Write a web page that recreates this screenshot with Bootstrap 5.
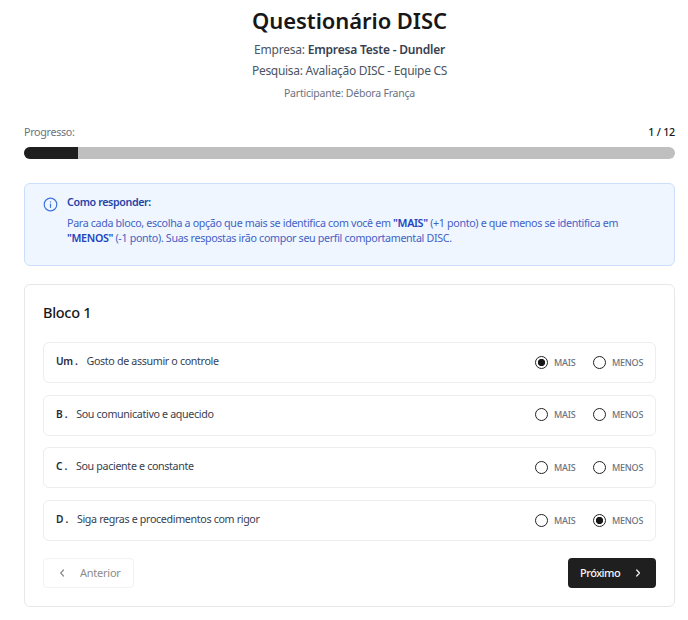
<!DOCTYPE html>
<html lang="pt-BR">
<head>
<meta charset="utf-8">
<meta name="viewport" content="width=device-width, initial-scale=1">
<title>Questionário DISC</title>
<link href="https://cdn.jsdelivr.net/npm/bootstrap@5.3.0/dist/css/bootstrap.min.css" rel="stylesheet">
<style>
body{font-family:"Noto Sans","Open Sans",sans-serif;font-size:10.7px;line-height:15px;color:#1f2937;background:#fff;letter-spacing:-.3px}
.page{padding:7px 13px 0 24px}
.page-body,.heading{width:651px}
.title{font-size:22px;line-height:27px;font-weight:600;color:#171717;letter-spacing:-.08px}
.heading .title{margin-bottom:5px}
.sub{font-size:12px;line-height:21px;color:#4b5563}
.company{letter-spacing:-.2px}
.sub strong{font-weight:600;color:#374151}
.person{font-size:10.5px;line-height:23px;padding-top:1px;color:#6b7280;letter-spacing:-.22px}
.meta-row{margin-top:19px;height:16px}
.meta-label{color:#6b7280}
.meta-count{font-weight:500;color:#171717;letter-spacing:-.2px}
.track{height:12px;margin-top:7px;border-radius:6px;background:#bfbfbf}
.track .progress-bar{background:#1f1f1f}
.notice{margin-top:24px;height:83px;padding:11px 18px;border:1px solid #cbdff8;border-radius:6px;background:#eff6ff;color:#4362c4;gap:9px}
.notice svg{margin-top:2px;flex:none}
.notice-title{font-weight:600;color:#2443a8;line-height:15px;margin-bottom:6px;letter-spacing:-.38px}
.notice-text{letter-spacing:-.33px}
.notice strong{font-weight:600;color:#1d44bd}
.block-card{margin-top:18px;height:323px;padding:18px 18px 0;border:1px solid #e5e7eb;border-radius:6px}
.block-title{font-size:14.5px;line-height:18px;font-weight:500;color:#171717;margin-bottom:21px}
.options{gap:11.7px}
.option{height:41px;padding:0 12px 2px;border:1px solid #ebedef;border-radius:6px;color:#374151;letter-spacing:-.34px}
.option-key{font-weight:600;color:#1f2937;margin-right:9px;font-size:10.2px}
.choice{width:58px;font-size:9px;color:#6b7280;font-weight:500;gap:6px;letter-spacing:-.22px;padding-top:1px}
.choice + .choice{width:50px}
.choice input{appearance:none;width:13px;height:13px;margin:0;border:1px solid #222;border-radius:50%;background:#fff;flex:none}
.choice input:checked{background:radial-gradient(circle,#171717 3.3px,transparent 4px)}
.actions{margin-top:17px}
.nav-btn{height:30px;border-radius:4px;font-size:11px;line-height:15px;padding:0 12px 2px}
.nav-btn svg{flex:none;margin-top:2px}
.prev,.prev:disabled{width:91px;border:1px solid #f1f2f3;color:#8c8c8c;opacity:1;letter-spacing:-.24px;gap:12px}
.next,.next:hover{width:88px;padding-left:11px;background:#1f1f1f;color:#f5f5f5;font-weight:500;letter-spacing:-.5px}
</style>
<script src="https://cdn.jsdelivr.net/npm/bootstrap@5.3.0/dist/js/bootstrap.bundle.min.js"></script>
</head>
<body>
<main class="page">
<header class="heading text-center">
<h1 class="title">Questionário DISC</h1>
<p class="sub company mb-0">Empresa: <strong>Empresa Teste - Dundler</strong></p>
<p class="sub mb-0">Pesquisa: Avaliação DISC - Equipe CS</p>
<p class="person mb-0">Participante: Débora França</p>
</header>
<div class="page-body">
<div class="meta-row d-flex justify-content-between align-items-center"><span class="meta-label">Progresso:</span><span class="meta-count">1 / 12</span></div>
<div class="progress track" role="progressbar" aria-valuenow="1" aria-valuemin="0" aria-valuemax="12"><div class="progress-bar" style="width:8.333%"></div></div>
<section class="notice d-flex align-items-start">
<svg width="15" height="15" viewBox="0 0 15 15" fill="none" stroke="#3b74e0" stroke-width="1.2" stroke-linecap="round"><circle cx="7.5" cy="7.5" r="6.3"/><path d="M7.5 7.2v3.1M7.5 4.8v.1"/></svg>
<div><div class="notice-title">Como responder:</div>
<div class="notice-text text-nowrap">Para cada bloco, escolha a opção que mais se identifica com você em <strong>"MAIS"</strong> (+1 ponto) e que menos se identifica em<br><strong>"MENOS"</strong> (-1 ponto). Suas respostas irão compor seu perfil comportamental DISC.</div></div>
</section>
<section class="block-card">
<h2 class="block-title">Bloco 1</h2>
<div class="options d-flex flex-column">
<div class="option d-flex align-items-center"><span class="option-key">Um .</span><span>Gosto de assumir o controle</span><label class="choice d-flex align-items-center ms-auto"><input type="radio" name="a" checked>MAIS</label><label class="choice d-flex align-items-center"><input type="radio" name="a2">MENOS</label></div>
<div class="option d-flex align-items-center"><span class="option-key">B .</span><span>Sou comunicativo e aquecido</span><label class="choice d-flex align-items-center ms-auto"><input type="radio" name="b">MAIS</label><label class="choice d-flex align-items-center"><input type="radio" name="b2">MENOS</label></div>
<div class="option d-flex align-items-center"><span class="option-key">C .</span><span>Sou paciente e constante</span><label class="choice d-flex align-items-center ms-auto"><input type="radio" name="c">MAIS</label><label class="choice d-flex align-items-center"><input type="radio" name="c2">MENOS</label></div>
<div class="option d-flex align-items-center"><span class="option-key">D .</span><span>Siga regras e procedimentos com rigor</span><label class="choice d-flex align-items-center ms-auto"><input type="radio" name="d">MAIS</label><label class="choice d-flex align-items-center"><input type="radio" name="d2" checked>MENOS</label></div>
</div>
<div class="actions d-flex justify-content-between">
<button class="btn nav-btn prev d-flex align-items-center" disabled><svg width="12" height="12" viewBox="0 0 12 12" fill="none" stroke="currentColor" stroke-width="1.2" stroke-linecap="round" stroke-linejoin="round"><path d="M7.5 3 4.7 6l2.8 3"/></svg>Anterior</button>
<button class="btn nav-btn next d-flex align-items-center justify-content-between">Próximo<svg width="12" height="12" viewBox="0 0 12 12" fill="none" stroke="currentColor" stroke-width="1.2" stroke-linecap="round" stroke-linejoin="round"><path d="M5.7 3 8.5 6 5.7 9"/></svg></button>
</div>
</section>
</div>
</main>
</body>
</html>
